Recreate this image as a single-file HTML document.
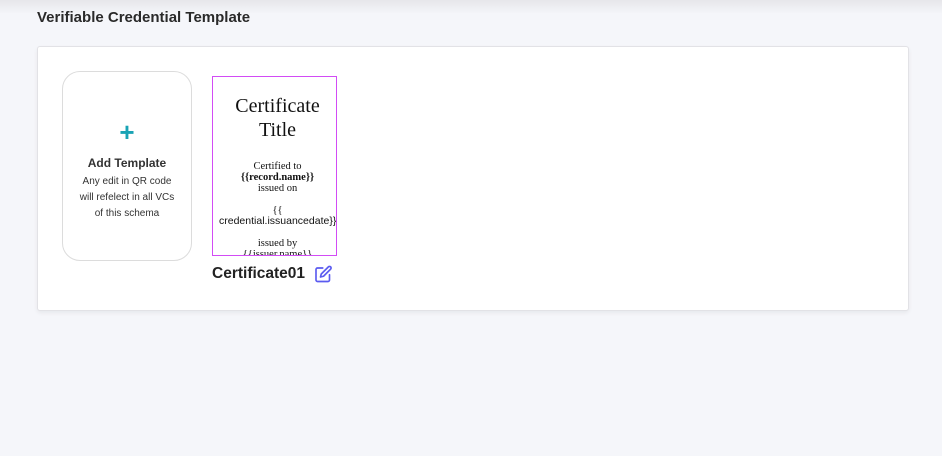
<!DOCTYPE html>
<html><head><style>
body{margin:0;width:942px;height:456px;background:#f5f6fa;font-family:"Liberation Sans",sans-serif;position:relative;overflow:hidden}
.top{position:absolute;left:0;top:0;width:942px;height:14px;background:linear-gradient(#e6e6ea,#f5f6fa)}
h1{position:absolute;left:37px;top:9px;margin:0;font-size:15px;font-weight:bold;color:#2a2a2a}
.card{position:absolute;left:37px;top:46px;width:870px;height:263px;background:#fff;border:1px solid #e2e2e6;border-radius:3px;box-shadow:0 2px 4px rgba(0,0,0,.06)}
.add{position:absolute;left:62px;top:71px;width:128px;height:188px;border:1px solid #dcdcdc;border-radius:18px;text-align:center;color:#333}
.plus{position:absolute;left:0;width:128px;top:47px;font-size:26px;font-weight:bold;color:#1aa3b5;line-height:26px}
.at{position:absolute;top:84px;width:128px;font-size:12px;font-weight:bold}
.ad{position:absolute;top:102px;left:14px;width:100px;font-size:10px;line-height:16px}
.cert{position:absolute;left:212px;top:76px;width:123px;height:178px;border:1px solid #d24cf5;overflow:hidden;font-family:"Liberation Serif",serif;text-align:center;color:#111}
.t{position:absolute;top:17px;left:0;width:123px;font-size:20px;line-height:24px;padding-left:6px;box-sizing:border-box}
.s{position:absolute;top:84px;left:0;width:123px;font-size:10.5px;line-height:11px;padding-left:6px;box-sizing:border-box}
.name{position:absolute;left:212px;top:265px;font-size:15.5px;font-weight:bold;color:#222}
</style></head><body>
<div class="top"></div>
<h1>Verifiable Credential Template</h1>
<div class="card"></div>
<div class="add"><div class="plus">+</div><div class="at">Add Template</div><div class="ad">Any edit in QR code will refelect in all VCs of this schema</div></div>
<div class="cert"><div class="t">Certificate<br>Title</div>
<div class="s">Certified to<br><b>{{record.name}}</b><br>issued on<br><br>{{<br><span style="font-family:'Liberation Sans';white-space:nowrap">credential.issuancedate}}</span><br><br>issued by<br>{{issuer.name}}</div></div>
<div class="name">Certificate01</div>
<svg style="position:absolute;left:314px;top:265px" width="19" height="18" viewBox="0 0 24 24" fill="none" stroke="#5b5bf0" stroke-width="2.2" stroke-linecap="round" stroke-linejoin="round"><path d="M11 4H4a2 2 0 0 0-2 2v14a2 2 0 0 0 2 2h14a2 2 0 0 0 2-2v-7"/><path d="M18.5 2.5a2.1 2.1 0 0 1 3 3L12 15l-4 1 1-4z"/></svg>
</body></html>
